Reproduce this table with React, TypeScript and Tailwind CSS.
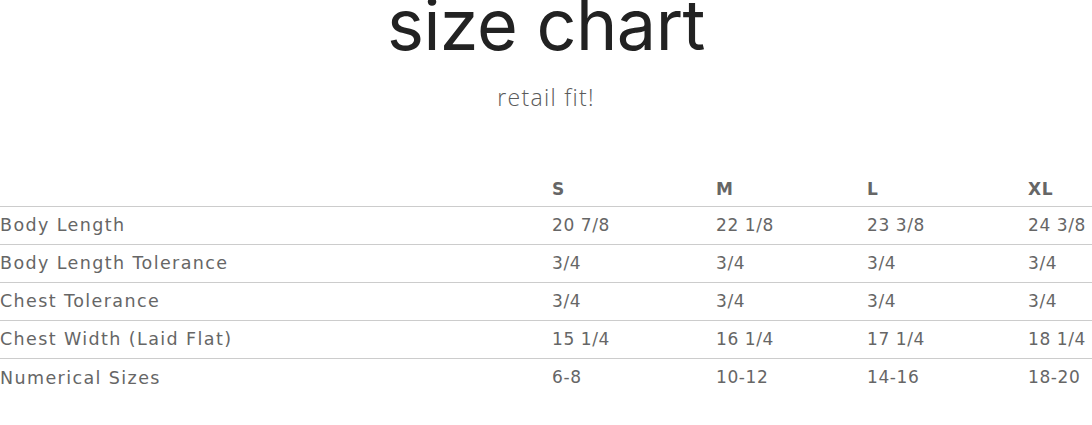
import React from "react";

const rows = [
  ["Body Length", "20 7/8", "22 1/8", "23 3/8", "24 3/8"],
  ["Body Length Tolerance", "3/4", "3/4", "3/4", "3/4"],
  ["Chest Tolerance", "3/4", "3/4", "3/4", "3/4"],
  ["Chest Width (Laid Flat)", "15 1/4", "16 1/4", "17 1/4", "18 1/4"],
  ["Numerical Sizes", "6-8", "10-12", "14-16", "18-20"],
];

const cols = "grid grid-cols-[552px_164px_151px_161px_1fr]";

export default function App() {
  return (
    <div className="w-[1092px] h-[425px] overflow-hidden bg-white">
      <div className="flex flex-col items-center">
        <h1 className="text-[70px] leading-none mt-[-10px] text-[#222] font-['Inter',sans-serif] font-normal tracking-[-0.5px]">
          size chart
        </h1>
        <p className="mt-[26px] text-[23px] leading-none font-light tracking-[1.3px] text-[#5a5a5a] font-['Open_Sans',sans-serif]">
          retail fit!
        </p>
      </div>
      <div className="mt-[64px] w-[1120px] font-['DejaVu_Sans',sans-serif] text-[17px] tracking-[0.6px] text-[#666]">
        <div className={`${cols} h-[34px] items-center font-bold border-b border-[#ccc]`}>
          <div></div>
          <div>S</div>
          <div>M</div>
          <div>L</div>
          <div>XL</div>
        </div>
        {rows.map((r, i) => (
          <div
            key={i}
            className={`${cols} h-[38px] items-center ${i < rows.length - 1 ? "border-b border-[#ccc]" : ""}`}
          >
            {r.map((c, j) => (
              <div key={j} className={j === 0 ? "text-[17.5px] tracking-[1.4px]" : ""}>
                {c}
              </div>
            ))}
          </div>
        ))}
      </div>
    </div>
  );
}
